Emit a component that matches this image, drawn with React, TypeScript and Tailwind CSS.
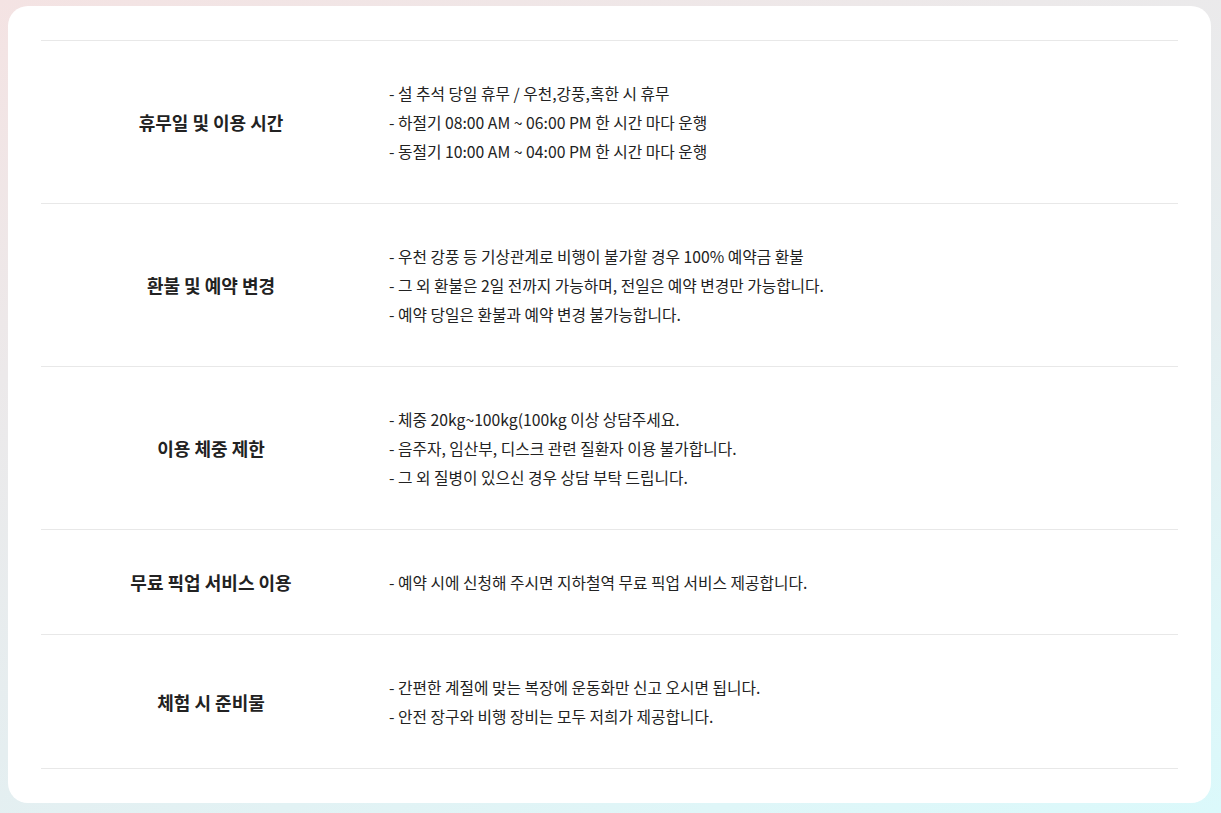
const rows: { title: string; lines: string[] }[] = [
  {
    title: "휴무일 및 이용 시간",
    lines: [
      "- 설 추석 당일 휴무 / 우천,강풍,혹한 시 휴무",
      "- 하절기 08:00 AM ~ 06:00 PM 한 시간 마다 운행",
      "- 동절기 10:00 AM ~ 04:00 PM 한 시간 마다 운행",
    ],
  },
  {
    title: "환불 및 예약 변경",
    lines: [
      "- 우천 강풍 등 기상관계로 비행이 불가할 경우 100% 예약금 환불",
      "- 그 외 환불은 2일 전까지 가능하며, 전일은 예약 변경만 가능합니다.",
      "- 예약 당일은 환불과 예약 변경 불가능합니다.",
    ],
  },
  {
    title: "이용 체중 제한",
    lines: [
      "- 체중 20kg~100kg(100kg 이상 상담주세요.",
      "- 음주자, 임산부, 디스크 관련 질환자 이용 불가합니다.",
      "- 그 외 질병이 있으신 경우 상담 부탁 드립니다.",
    ],
  },
  {
    title: "무료 픽업 서비스 이용",
    lines: ["- 예약 시에 신청해 주시면 지하철역 무료 픽업 서비스 제공합니다."],
  },
  {
    title: "체험 시 준비물",
    lines: [
      "- 간편한 계절에 맞는 복장에 운동화만 신고 오시면 됩니다.",
      "- 안전 장구와 비행 장비는 모두 저희가 제공합니다.",
    ],
  },
];

export default function App() {
  return (
    <div
      className="w-[1221px] h-[813px] overflow-hidden pt-[6px] pl-[8px] bg-[linear-gradient(160deg,#f4e3e3_0%,#ece9ea_30%,#e5eef0_60%,#dff6f8_85%,#dbf9fb_100%)]"
      style={{ fontFamily: '"Noto Sans CJK KR", "Noto Sans", sans-serif' }}
    >
      <div className="w-[1203px] h-[797px] bg-white rounded-[20px] px-[33px] pt-[34px]">
        <div className="border-b border-[#e8e8e8]">
          {rows.map((row) => (
            <div key={row.title} className="flex items-center border-t border-[#e8e8e8] pt-[38px] pb-[37px]">
              <div className="w-[340px] text-center text-[18px] font-bold text-[#222]">{row.title}</div>
              <div className="pl-[8px] text-[15.75px] leading-[29px] text-[#222]">
                {row.lines.map((l) => (
                  <p key={l}>{l}</p>
                ))}
              </div>
            </div>
          ))}
        </div>
      </div>
    </div>
  );
}
